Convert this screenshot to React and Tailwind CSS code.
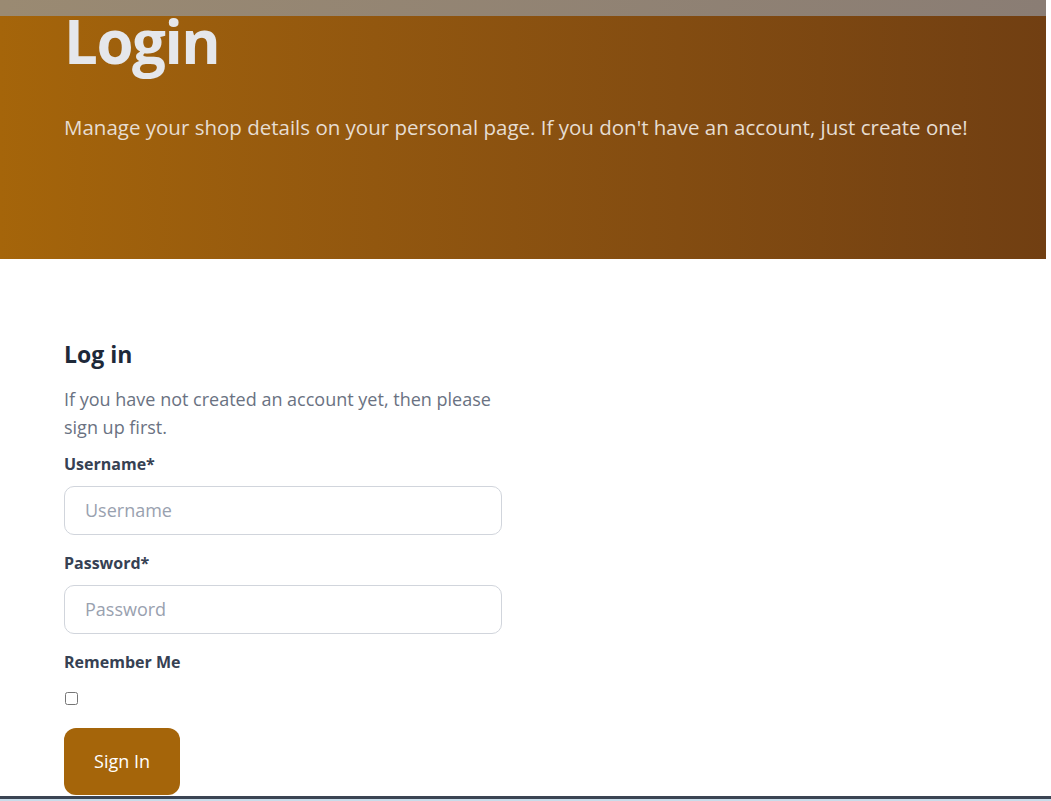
import React from 'react';

export default function App() {
  return (
    <div className="min-h-[801px] bg-white flex flex-col font-['Open_Sans',_sans-serif]">
      {/* top nav strip */}
      <div className="h-4 mr-[5px] bg-gradient-to-r from-[#9a8a72] to-[#8a7d74]" />

      {/* hero */}
      <header className="h-[243px] mr-[5px] bg-gradient-to-r from-[#a5650a] to-[#713f12] px-16">
        <h1 className="-mt-[5px] text-6xl leading-[60px] font-bold text-gray-200 tracking-tight">Login</h1>
        <p className="mt-[41px] text-[20.5px] text-[#e6ddd2]">
          Manage your shop details on your personal page. If you don't have an account, just create one!
        </p>
      </header>

      {/* form */}
      <main className="flex-1 px-16 pt-[78px] pb-[1px]">
        <div className="w-[438px]">
          <h2 className="text-[23px] font-bold text-gray-800">Log in</h2>
          <p className="mt-[13px] text-lg leading-7 text-gray-500">
            If you have not created an account yet, then please sign up first.
          </p>
          <form className="mt-[11px] flex flex-col">
            <label className="text-base font-bold text-gray-700">Username*</label>
            <input
              type="text"
              placeholder="Username"
              className="mt-[10px] h-[49px] w-full rounded-[10px] border border-gray-300 px-5 text-lg text-gray-700 placeholder:text-gray-400 outline-none"
            />
            <label className="mt-[16px] text-base font-bold text-gray-700">Password*</label>
            <input
              type="password"
              placeholder="Password"
              className="mt-[10px] h-[49px] w-full rounded-[10px] border border-gray-300 px-5 text-lg text-gray-700 placeholder:text-gray-400 outline-none"
            />
            <label className="mt-[16px] text-base font-bold text-gray-700">Remember Me</label>
            <input type="checkbox" className="mt-[18px] ml-[1px] h-[13px] w-[13px] self-start" />
            <button
              type="button"
              className="mt-[23px] self-start h-[67px] w-[116px] rounded-xl bg-[#a5650a] text-lg text-white"
            >
              Sign In
            </button>
          </form>
        </div>
      </main>

      <div className="h-[3px] bg-[#3b4453]" />
      <div className="h-[2px] bg-[#c9dcea]" />
    </div>
  );
}
